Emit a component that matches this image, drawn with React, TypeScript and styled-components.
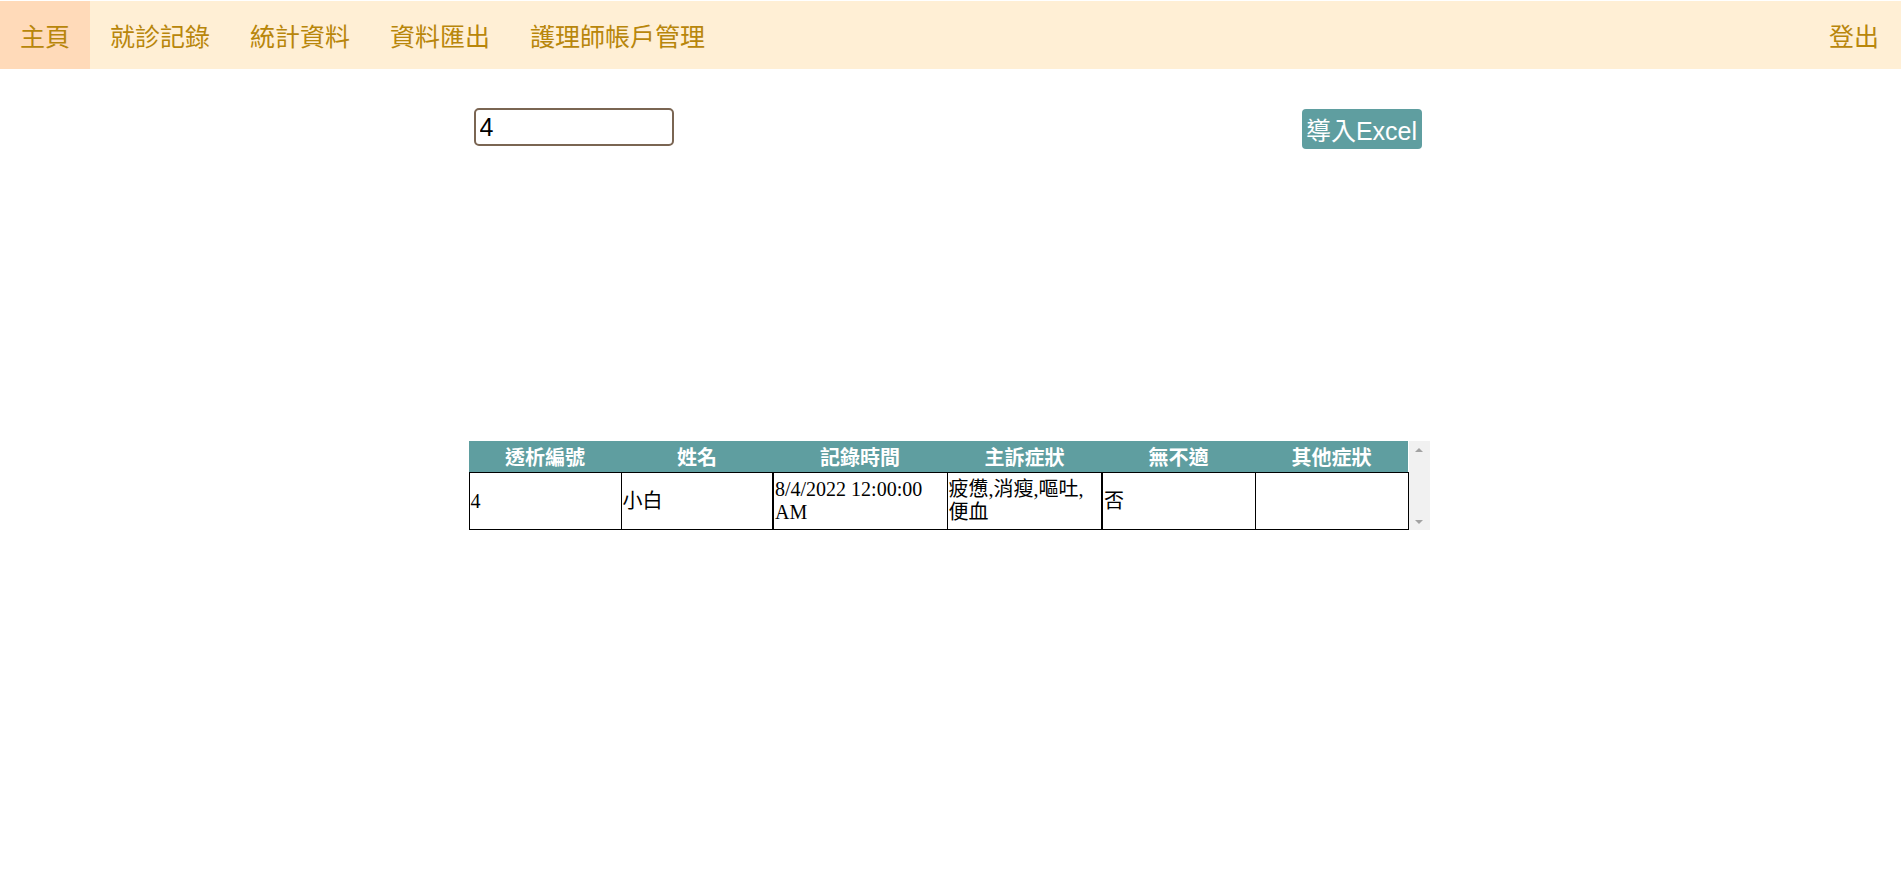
import styled, { createGlobalStyle } from "styled-components"

const GlobalStyle = createGlobalStyle`
  html, body {
    margin: 0;
    padding: 0;
    background: #fff;
  }

  body {
    font-family: "Liberation Serif", "Noto Sans CJK TC", serif;
    font-size: 20px;
    color: #000;
  }
`

const NavBar = styled.nav`
  margin-top: 1px;
  height: 68px;
  background: #ffefd5;
  display: flex;
  align-items: stretch;
  font-family: "Noto Sans CJK TC", "Noto Sans", sans-serif;
  font-size: 25px;
`

const NavItem = styled.a<{ $active?: boolean; $right?: boolean }>`
  display: flex;
  align-items: center;
  padding: 0 ${(p) => (p.$right ? "22px" : "20px")} 0 20px;
  color: #b8860b;
  text-decoration: none;
  background: ${(p) => (p.$active ? "#ffdab9" : "transparent")};
  margin-left: ${(p) => (p.$right ? "auto" : "0")};
  cursor: pointer;
`

const Main = styled.main`
  width: 960px;
  margin: 0 auto;
  position: relative;
  left: -2px;
`

const Toolbar = styled.div`
  margin-top: 39px;
  padding: 0 7px 0 5px;
  display: flex;
  justify-content: space-between;
  align-items: flex-start;
`

const SearchInput = styled.input`
  box-sizing: border-box;
  width: 200px;
  height: 38px;
  border: 2px solid #7a6552;
  border-radius: 5px;
  padding: 0 4px;
  font-family: "Liberation Sans", "Noto Sans CJK TC", sans-serif;
  font-size: 25px;
  color: #000;
  outline: none;
`

const ExportButton = styled.button`
  margin-top: 1px;
  box-sizing: border-box;
  width: 120px;
  height: 40px;
  border: none;
  border-radius: 4px;
  background: #5f9ea0;
  color: #fff;
  font-family: "Liberation Sans", "Noto Sans CJK TC", sans-serif;
  font-size: 25px;
  padding: 0 2px;
  display: flex;
  align-items: center;
  justify-content: center;
  white-space: nowrap;
  cursor: pointer;
`

const TableArea = styled.div`
  margin-top: 292px;
  display: flex;
  align-items: stretch;
`

const Table = styled.table`
  width: 939px;
  flex: 0 0 939px;
  border-collapse: collapse;
  table-layout: fixed;
`

const HeadCell = styled.th`
  height: 31px;
  padding: 0;
  background: #5f9ea0;
  color: #fff;
  font-family: "Noto Sans CJK TC", "Noto Sans", sans-serif;
  font-weight: 700;
  font-size: 20px;
  line-height: 31px;
  text-align: center;
  border: none;
`

const Cell = styled.td<{ $thick?: boolean }>`
  height: 56px;
  padding: 0 1px;
  border: 1px solid #000;
  border-left-width: ${(p) => (p.$thick ? "2px" : "1px")};
  vertical-align: middle;
  text-align: left;
  line-height: 23px;
  word-break: break-word;
`

const ScrollTrack = styled.div`
  width: 21px;
  flex: 0 0 21px;
  background: #f1f1f1;
  display: flex;
  flex-direction: column;
  justify-content: space-between;
  align-items: center;
  padding: 7px 0 6px;
`

const Arrow = styled.span<{ $down?: boolean }>`
  width: 0;
  height: 0;
  border-left: 4px solid transparent;
  border-right: 4px solid transparent;
  ${(p) =>
    p.$down
      ? "border-top: 4px solid #a3a3a3;"
      : "border-bottom: 4px solid #a3a3a3;"}
`

const columns = [
  { label: "透析編號", w: 152 },
  { label: "姓名", w: 152 },
  { label: "記錄時間", w: 174 },
  { label: "主訴症狀", w: 155 },
  { label: "無不適", w: 153 },
  { label: "其他症狀", w: 153 },
]

const rows = [
  {
    id: "4",
    name: "小白",
    time: "8/4/2022 12:00:00 AM",
    symptoms: "疲憊,消瘦,嘔吐,便血",
    none: "否",
    other: "",
  },
]

export default function App() {
  return (
    <>
      <GlobalStyle />
      <NavBar>
        <NavItem $active>主頁</NavItem>
        <NavItem>就診記錄</NavItem>
        <NavItem>統計資料</NavItem>
        <NavItem>資料匯出</NavItem>
        <NavItem>護理師帳戶管理</NavItem>
        <NavItem $right>登出</NavItem>
      </NavBar>

      <Main>
        <Toolbar>
          <SearchInput defaultValue="4" />
          <ExportButton>導入Excel</ExportButton>
        </Toolbar>

        <TableArea>
          <Table>
            <colgroup>
              {columns.map((c) => (
                <col key={c.label} style={{ width: c.w }} />
              ))}
            </colgroup>
            <thead>
              <tr>
                {columns.map((c) => (
                  <HeadCell key={c.label}>{c.label}</HeadCell>
                ))}
              </tr>
            </thead>
            <tbody>
              {rows.map((r) => (
                <tr key={r.id}>
                  <Cell>{r.id}</Cell>
                  <Cell>{r.name}</Cell>
                  <Cell $thick>{r.time}</Cell>
                  <Cell>{r.symptoms}</Cell>
                  <Cell $thick>{r.none}</Cell>
                  <Cell>{r.other}</Cell>
                </tr>
              ))}
            </tbody>
          </Table>
          <ScrollTrack>
            <Arrow />
            <Arrow $down />
          </ScrollTrack>
        </TableArea>
      </Main>
    </>
  )
}
